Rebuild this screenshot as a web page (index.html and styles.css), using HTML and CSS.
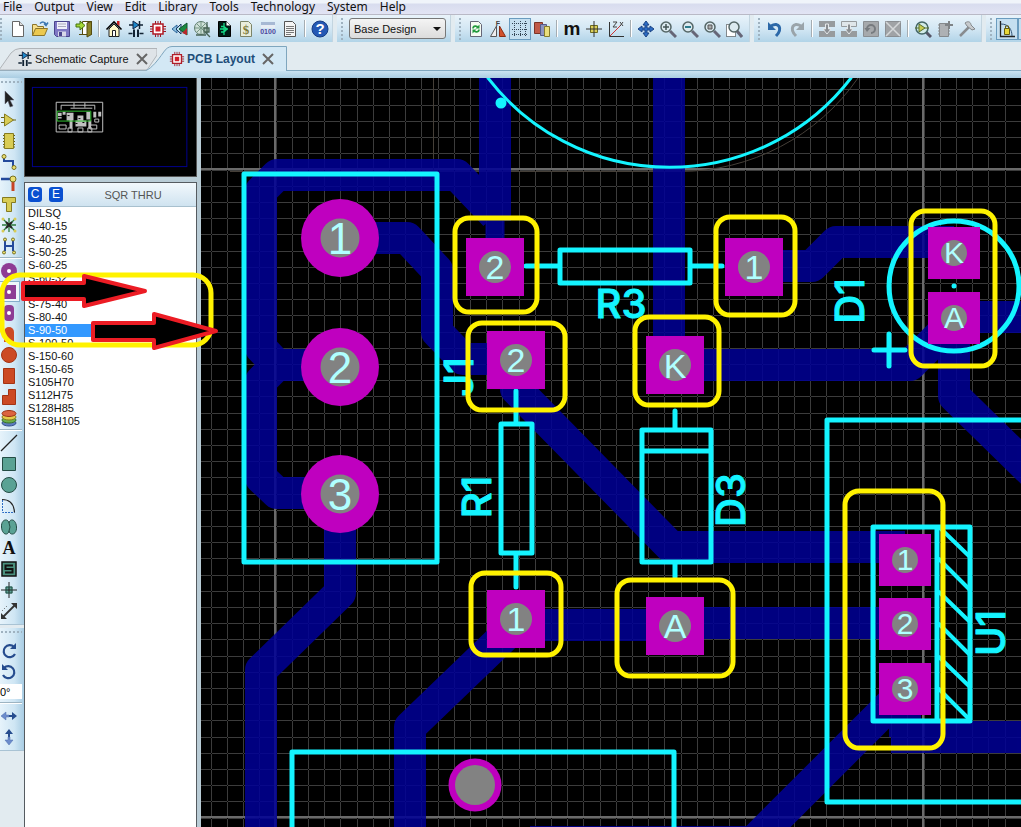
FILE: index.html
```html
<!DOCTYPE html>
<html lang="en">
<head>
<meta charset="utf-8">
<title>PCB Layout</title>
<link rel="stylesheet" href="styles.css">
</head>
<body>
<div class="app">
  <nav class="menubar" aria-label="Main menu">
    <button>File</button><button>Output</button><button>View</button><button>Edit</button><button>Library</button><button>Tools</button><button>Technology</button><button>System</button><button>Help</button>
  </nav>

  <div class="toolbar">
    <div class="group group-first">
      <button aria-label="New"><svg viewBox="0 0 18 18"><path d="M3.500 1.500h7l4 4v11h-11z" fill="#fff" stroke="#666"/><path d="M10.500 1.500v4h4" fill="#ddd" stroke="#666"/></svg></button>
      <button aria-label="Open"><svg viewBox="0 0 18 18"><path d="M1.500 15.500v-11h4l1 2h6v3" fill="#f6e08c" stroke="#8b7428"/><path d="M1.500 15.500l3-7h12l-3 7z" fill="#ecc94e" stroke="#8b7428"/><path d="M9 3.500c2-2 5-2 6 1m-2-1l2 2 2-3" fill="none" stroke="#3b76b0" stroke-width="1.500"/></svg></button>
      <button aria-label="Save"><svg viewBox="0 0 18 18"><path d="M1.500 1.500h15v15h-13l-2-2z" fill="#7f78c4" stroke="#4a448c"/><path d="M4 2h10v7H4z" fill="#f0f0fa"/><path d="M5 4h8M5 6.500h8" stroke="#aab"/><path d="M5 11.500h8v5H5z" fill="#d8d8e8"/><path d="M6 12h3v4H6z" fill="#4a448c"/></svg></button>
      <button aria-label="Close project"><svg viewBox="0 0 18 18"><path d="M7.500 1.500h9v13h-9z" fill="#fff" stroke="#554c10"/><path d="M12 3l4.500-1.500v13L12 17z" fill="#8a8228" stroke="#554c10"/><path d="M1 4h4V1l5 4.500L5 10V7H1z" fill="#a4d836" stroke="#44730f"/><path d="M4 14.500h8" stroke="#554c10"/></svg></button>
      <i class="sep"></i>
      <button aria-label="Home"><svg viewBox="0 0 18 18"><path d="M4 9v7.500h10V9L9 4z" fill="#fff8c8" stroke="#222"/><path d="M1.500 9.500L9 2l7.500 7.500" fill="none" stroke="#000" stroke-width="1.600"/><path d="M12 1h2.500v5L12 4z" fill="#c22"/><path d="M7.500 10.500h3v6h-3z" fill="#fff" stroke="#222"/></svg></button>
      <button aria-label="Schematic"><svg viewBox="0 0 18 18"><g stroke="#123" stroke-width="1.500" fill="none"><path d="M2 5h14M1.500 13.500h4M12.500 13.500h4M12.500 1v8"/><path d="M7 10v7M11 10v7M6 10.500h2M10 10.500h2" stroke-width="2"/></g><path d="M6 1l6 4-6 4z" fill="#1c86c8" stroke="#124"/></svg></button>
      <button aria-label="PCB"><svg viewBox="0 0 18 18"><g stroke="#9c1c28"><path d="M6.500 1v16M9 1v16M11.500 1v16M1 6.500h16M1 9h16M1 11.500h16"/></g><path d="M4 4h10v10H4z" fill="#fff" stroke="#b01c28" stroke-width="1.500"/><path d="M6.500 6.500h5v5h-5z" fill="#d0202c"/></svg></button>
      <button aria-label="3D viewer"><svg viewBox="0 0 18 18"><path d="M1 9l5-4v8z" fill="#8cc0e0" stroke="#2f689c"/><path d="M5 9l5-5v10z" fill="#b8dcec" stroke="#1b3660"/><path d="M8 9l8-6v12z" fill="#1a8840" stroke="#0d542a"/><path d="M11 13l5-5v7z" fill="#b8282c"/></svg></button>
      <button aria-label="Gerber viewer"><svg viewBox="0 0 18 18"><circle cx="8" cy="8" r="6.500" fill="#cfe0d8" stroke="#5e7c6c"/><path d="M2 8h13M8 2v12M4 4l8 8M12 4l-8 8" stroke="#759784"/><path d="M14 2v12M3 15h10M12 12l5 5M11 8h5v4h-5z" fill="#a8bfb4" stroke="#486456" stroke-width="1.300"/></svg></button>
      <button aria-label="Design explorer"><svg viewBox="0 0 18 18"><path d="M3.500 1.500h8l4 4v11h-12z" fill="#001c14" stroke="#000"/><path d="M11.500 1.500v4h4z" fill="#fff"/><path d="M9 3v12M5 9h8M6 6.500h3M9 6.500l3 2.500-3 3H6" stroke="#14d884" fill="none" stroke-width="1.300"/></svg></button>
      <button aria-label="Bill of materials"><svg viewBox="0 0 18 18"><path d="M3.500 1.500h8l3 3v12h-11z" fill="#e9eddc" stroke="#7c8468"/><text x="9" y="14" class="dollar">$</text></svg></button>
      <button aria-label="Source code"><svg viewBox="0 0 18 18"><path d="M2 2h14v6H2z" fill="#e8edf4"/><path d="M2 2h14v3H2z" fill="#a7b9d4"/><text x="9" y="14" class="digits">0100</text></svg></button>
      <button aria-label="Project notes"><svg viewBox="0 0 18 18"><path d="M3.500 1.500h8l3 3v12h-11z" fill="#f5f5f5" stroke="#555"/><path d="M5 6.500h8M5 8.500h8M5 10.500h8M5 12.500h8M5 14.500h5" stroke="#777"/></svg></button>
      <i class="sep"></i>
      <button aria-label="Help"><svg viewBox="0 0 18 18"><circle cx="9" cy="9" r="8" fill="#2458b4" stroke="#163c84"/><text x="9" y="14" class="q">?</text></svg></button>
    </div>

    <div class="group group-select">
      <select aria-label="Design variant"><option>Base Design</option></select>
    </div>

    <div class="group">
      <button aria-label="Redraw"><svg viewBox="0 0 18 18"><path d="M3.500 1.500h8l3 3v12h-11z" fill="#f5fbf2" stroke="#667"/><path d="M6 8.500c0-3 4-3 5-1M12 9.500c0 3-4 3-5 1" fill="none" stroke="#239a3c" stroke-width="1.600"/><path d="M12.500 4.500v4h-4zM5.500 13.500v-4h4z" fill="#239a3c"/></svg></button>
      <button aria-label="Flip"><svg viewBox="0 0 18 18"><path d="M7.500 6v10.500h-6z" fill="#eee" stroke="#555"/><path d="M10.500 6v10.500h6z" fill="#d2512c" stroke="#8b2c12"/><text x="9" y="6" class="tiny">F</text></svg></button>
      <button aria-label="Grid" aria-pressed="true" class="pressed"><svg viewBox="0 0 18 18"><path d="M1 3.500h16M1 9.500h16M1 14.500h16M3.500 1v16M9.500 1v16M14.500 1v16" stroke="#345" stroke-dasharray="1 1"/></svg></button>
      <button aria-label="Layers"><svg viewBox="0 0 18 18"><path d="M1.500 2.500h8v11h-8z" fill="#c05a48" stroke="#7c3426"/><path d="M7.500 4.500h6v11h-6z" fill="#8d94c0" stroke="#555c8c"/><path d="M11.500 6.500h5v10h-5z" fill="#eadf7c" stroke="#857b2c"/></svg></button>
      <i class="sep"></i>
      <button aria-label="Metric" class="metric">m</button>
      <button aria-label="Origin"><svg viewBox="0 0 18 18"><path d="M9 1v16M1 9h16" stroke="#333"/><path d="M5.500 5.500h7v7h-7z" fill="#dcd05a" stroke="#6d6a20"/><path d="M9 5v8M5 9h8" stroke="#333"/></svg></button>
      <button aria-label="Polar"><svg viewBox="0 0 18 18"><path d="M2.500 2v14.500H17" fill="none" stroke="#333"/><path d="M3 16L14 5" stroke="#c33"/><path d="M6 2h4L6 7h4M13 2l3 4M16 2l-3 4" fill="none" stroke="#444"/></svg></button>
      <i class="sep"></i>
      <button aria-label="Pan"><svg viewBox="0 0 18 18"><path d="M9 1l3 4h-2v3h3V6l4 3-4 3v-2h-3v3h2l-3 4-3-4h2v-3H5v2L1 9l4-3v2h3V5H6z" fill="#2c6cc4" stroke="#1a4384"/></svg></button>
      <button aria-label="Zoom in"><svg viewBox="0 0 18 18"><path d="M11 11l6 6" stroke="#667" stroke-width="3"/><circle cx="7" cy="7" r="5" fill="#dceaf0" stroke="#566" stroke-width="1.500"/><path d="M4 7h6M7 4v6" stroke="#455" stroke-width="1.500"/></svg></button>
      <button aria-label="Zoom out"><svg viewBox="0 0 18 18"><path d="M11 11l6 6" stroke="#667" stroke-width="3"/><circle cx="7" cy="7" r="5" fill="#dceaf0" stroke="#566" stroke-width="1.500"/><path d="M4 7h6" stroke="#2c7c8c" stroke-width="2"/></svg></button>
      <button aria-label="Zoom all"><svg viewBox="0 0 18 18"><path d="M11 11l6 6" stroke="#667" stroke-width="3"/><circle cx="7" cy="7" r="5" fill="#dceaf0" stroke="#566" stroke-width="1.500"/><path d="M5 5h4v4H5z" fill="#aaa" stroke="#555"/></svg></button>
      <button aria-label="Zoom area"><svg viewBox="0 0 18 18"><path d="M1.500 4.500h9v12h-9z" fill="#fff" stroke="#222" stroke-dasharray="1 1"/><path d="M12 11l5 6" stroke="#667" stroke-width="3"/><circle cx="9" cy="7" r="5" fill="#dceaf0" stroke="#566" stroke-width="1.500"/></svg></button>
    </div>

    <div class="group group-edit">
      <button aria-label="Undo"><svg viewBox="0 0 18 18"><path d="M5 6c8-5 12 3 5 10" fill="none" stroke="#2c68a8" stroke-width="3"/><path d="M2 2v8h8z" fill="#2c68a8"/></svg></button>
      <button aria-label="Redo"><svg viewBox="0 0 18 18"><path d="M13 6C5 1 1 9 8 16" fill="none" stroke="#9aa4aa" stroke-width="3"/><path d="M16 2v8H8z" fill="#9aa4aa"/></svg></button>
      <i class="sep"></i>
      <button aria-label="Block copy"><svg viewBox="0 0 18 18"><path d="M1 1h16v6H1zM1 11h16v6H1z" fill="#979b9e"/><path d="M7.500 4v5H5l4 5 4-5h-2.500V4z" fill="#8a8e92" stroke="#e5e8ea"/></svg></button>
      <button aria-label="Block move"><svg viewBox="0 0 18 18"><path d="M1.500 1.500h15v5h-15z" fill="#dfe6ea" stroke="#979b9e"/><path d="M1 11h16v6H1z" fill="#979b9e"/><path d="M7.500 4v5H5l4 5 4-5h-2.500V4z" fill="#8a8e92" stroke="#e5e8ea"/></svg></button>
      <button aria-label="Block rotate"><svg viewBox="0 0 18 18"><path d="M1.500 1.500h15v15h-15z" fill="#a6a9ac" stroke="#8a8e92"/><path d="M5 9a4 4 0 1 1 4 4" fill="none" stroke="#777b7f" stroke-width="2"/><path d="M2.500 8h6L5 12z" fill="#777b7f"/></svg></button>
      <button aria-label="Block delete"><svg viewBox="0 0 18 18"><path d="M1.500 1.500h15v15h-15z" fill="#a0a3a6" stroke="#8a8e92"/><path d="M2 2l14 14M16 2L2 16" stroke="#d4d7d9" stroke-width="1.500"/></svg></button>
      <i class="sep"></i>
      <button aria-label="Pick parts"><svg viewBox="0 0 18 18"><path d="M12 12l5 5" stroke="#556" stroke-width="3"/><circle cx="8" cy="8" r="6" fill="#d2ebe8" stroke="#466" stroke-width="1.500"/><path d="M5 4l6 4-6 4zM1 8h4M11 8h4" fill="#c8cc50" stroke="#59702c"/></svg></button>
      <button aria-label="Make package"><svg viewBox="0 0 18 18"><path d="M2 5h2M2 8h2M2 11h2M2 14h2M12 8h2M12 11h2M12 14h2" stroke="#888"/><path d="M3.500 3.500h9v13h-9z" fill="#aeb1b4" stroke="#85898c"/><path d="M13 1v8M9 5h8" stroke="#7f8386" stroke-width="2"/></svg></button>
      <button aria-label="Decompose"><svg viewBox="0 0 18 18"><path d="M2 16l9-9" stroke="#888c90" stroke-width="2.500"/><path d="M7 3c4-3 6 0 6 2l4 4-3 1-5-4z" fill="#c7cacd" stroke="#85898c"/></svg></button>
    </div>

    <div class="group group-last">
      <button aria-label="Trace angle lock" aria-pressed="true" class="pressed"><svg viewBox="0 0 18 18"><path d="M2.500 1v15.500H17" fill="none" stroke="#222" stroke-width="1.300"/><path d="M3 4c8 0 11 6 11 12" fill="none" stroke="#357"/><path d="M6.500 8.500h5v6h-5z" fill="#e8d838" stroke="#655d10"/><path d="M7.500 8V6h3v2" fill="none" stroke="#655d10"/></svg></button>
      <button aria-label="Auto trace" aria-pressed="true" class="pressed"></button>
    </div>
  </div>

  <div class="tabs" role="tablist">
    <div class="tab" role="tab">
      <svg class="tab-shape" viewBox="0 0 157 24" preserveAspectRatio="none"><path d="M-1 23L11 6Q15 1.500 20 1.500H157V8L147 23z" fill="#dfe4e8" stroke="#b0b4b8"/></svg>
      <svg class="tab-icon" viewBox="0 0 18 18"><g stroke="#123" stroke-width="1.500" fill="none"><path d="M2 5h14M1.500 13.500h4M12.500 13.500h4M12.500 1v8"/><path d="M7 10v7M11 10v7" stroke-width="2"/></g><path d="M6 1l6 4-6 4z" fill="#1c86c8" stroke="#124"/></svg>
      <span>Schematic Capture</span>
      <button aria-label="Close Schematic Capture"><svg viewBox="0 0 12 12"><path d="M1 1l10 10M11 1L1 11" stroke="#666" stroke-width="2"/></svg></button>
    </div>
    <div class="tab active" role="tab" aria-selected="true">
      <svg class="tab-shape" viewBox="0 0 141 25" preserveAspectRatio="none"><path d="M0 24.500C6 22 12 14 17 7Q21 .5 26 .5H140.500V25H0z" fill="#d3e8f5"/><path d="M0 24.500C6 22 12 14 17 7Q21 .5 26 .5H140.500V25" fill="none" stroke="#7fa6be"/></svg>
      <svg class="tab-icon" viewBox="0 0 18 18"><g stroke="#9c1c28"><path d="M6.500 1v16M9 1v16M11.500 1v16M1 6.500h16M1 9h16M1 11.500h16"/></g><path d="M4 4h10v10H4z" fill="#fff" stroke="#b01c28" stroke-width="1.500"/><path d="M6.500 6.500h5v5h-5z" fill="#d0202c"/></svg>
      <span>PCB Layout</span>
      <button aria-label="Close PCB Layout"><svg viewBox="0 0 12 12"><path d="M1 1l10 10M11 1L1 11" stroke="#666" stroke-width="2"/></svg></button>
    </div>
  </div>

  <main class="work">
    <aside class="tools">
      <div class="toolset">
        <i class="grip"></i>
        <button aria-label="Selection"><svg viewBox="0 0 18 18"><path d="M5 1v13l3-3 2 6 3-1-3-6h4z" fill="#222" stroke="#667" stroke-width=".5"/></svg></button>
        <button aria-label="Component"><svg viewBox="0 0 18 18"><path d="M1 6.500h4M1 11.500h4M12 9h4" stroke="#6b6414"/><path d="M4.500 3l9 6-9 6z" fill="#d8cc54" stroke="#857b20"/></svg></button>
        <button aria-label="Package"><svg viewBox="0 0 18 18"><path d="M3 3.500h12M3 6.500h12M3 9.500h12M3 12.500h12M3 15h12" stroke="#6b6414"/><path d="M4.500 1.500h9v15h-9z" fill="#d8cc54" stroke="#857b20"/></svg></button>
        <button aria-label="Track"><svg viewBox="0 0 18 18"><path d="M4 4v4h9v6" fill="none" stroke="#244a9c" stroke-width="2"/><circle cx="4" cy="3.500" r="2" fill="#eadf70" stroke="#777020"/><circle cx="14" cy="14.500" r="2" fill="#eadf70" stroke="#777020"/></svg></button>
        <button aria-label="Via"><svg viewBox="0 0 18 18"><path d="M1 5h11" stroke="#244a9c" stroke-width="2.500"/><path d="M13 7v10" stroke="#c84424" stroke-width="3"/><circle cx="13" cy="5" r="3" fill="#eadf70" stroke="#777020"/></svg></button>
        <button aria-label="Zone"><svg viewBox="0 0 18 18"><path d="M2.500 2.500h13v5h-4v9h-5v-9h-4z" fill="#d8cc54" stroke="#857b20"/></svg></button>
        <button aria-label="Ratsnest"><svg viewBox="0 0 18 18"><path d="M9 2v14M3 3l12 12M15 3L3 15M2 9h14" stroke="#2d7a3c" stroke-width="1.300"/><path d="M6 6l6 6M12 6l-6 6" stroke="#222" stroke-width="2"/><g fill="#d8cc54"><circle cx="3" cy="3" r="1.500"/><circle cx="15" cy="3" r="1.500"/><circle cx="3" cy="15" r="1.500"/><circle cx="15" cy="15" r="1.500"/></g></svg></button>
        <button aria-label="Connectivity"><svg viewBox="0 0 18 18"><path d="M5 3v6M13 3v11M5 9h8M5 9v5" stroke="#244a9c" stroke-width="2" fill="none"/><g fill="#eadf70" stroke="#777020"><circle cx="5" cy="2.500" r="1.500"/><circle cx="13" cy="2.500" r="1.500"/><circle cx="4" cy="15.500" r="1.500"/><circle cx="14" cy="15.500" r="1.500"/></g></svg></button>
        <i class="rule"></i>
        <button aria-label="Round pad"><svg viewBox="0 0 18 18"><circle cx="9" cy="9" r="8" fill="#8e3c94"/><circle cx="9" cy="9" r="2" fill="#fff"/></svg></button>
        <button aria-label="Square pad" class="chosen"><svg viewBox="0 0 18 18"><path d="M2 2h14v14H2z" fill="#8e3c94"/><circle cx="9" cy="9" r="2" fill="#fff"/></svg></button>
        <button aria-label="DIL pad"><svg viewBox="0 0 18 18"><rect x="4" y="1" width="10" height="16" rx="4" fill="#8e3c94"/><circle cx="9" cy="9" r="2" fill="#fff"/></svg></button>
        <button aria-label="Edge connector pad"><svg viewBox="0 0 18 18"><path d="M4 17V7a5 5 0 0 1 10 0v10z" fill="#cc4a24"/></svg></button>
        <button aria-label="Circular SMT pad"><svg viewBox="0 0 18 18"><circle cx="9" cy="9" r="7.500" fill="#cc4a24" stroke="#a43414"/></svg></button>
        <button aria-label="Rectangular SMT pad"><svg viewBox="0 0 18 18"><path d="M3.500 1.500h11v15h-11z" fill="#cc4a24" stroke="#a43414"/></svg></button>
        <button aria-label="Polygonal SMT pad"><svg viewBox="0 0 18 18"><path d="M2.500 16.500v-9h6v-6h7v15z" fill="#cc4a24" stroke="#a43414"/></svg></button>
        <button aria-label="Pad stack"><svg viewBox="0 0 18 18"><ellipse cx="9" cy="14" rx="7" ry="3" fill="#5c7cc0" stroke="#33508c"/><ellipse cx="9" cy="11" rx="7" ry="3" fill="#6ab04c" stroke="#3c7428"/><ellipse cx="9" cy="8" rx="7" ry="3" fill="#e4cc48" stroke="#8c7820"/><ellipse cx="9" cy="4.500" rx="7" ry="3" fill="#dc6440" stroke="#9c3414"/></svg></button>
        <i class="rule"></i>
        <button aria-label="Line"><svg viewBox="0 0 18 18"><path d="M1 17L17 1" stroke="#222" stroke-width="1.300"/></svg></button>
        <button aria-label="Box"><svg viewBox="0 0 18 18"><path d="M2.500 2.500h13v13h-13z" fill="#5aa294" stroke="#244c44"/></svg></button>
        <button aria-label="Circle"><svg viewBox="0 0 18 18"><circle cx="9" cy="9" r="7.500" fill="#5aa294" stroke="#244c44"/></svg></button>
        <button aria-label="Arc"><svg viewBox="0 0 18 18"><path d="M2.500 3v12.500h12" fill="none" stroke="#2c6cc4" stroke-dasharray="2 1"/><path d="M2 2.500c8 0 12 5 12.500 13" fill="none" stroke="#222" stroke-width="1.200"/></svg></button>
        <button aria-label="Closed path"><svg viewBox="0 0 18 18"><path d="M9 5c1-5 7-4 7.500 4S10 18 9 13C8 18 2 17 1.500 9S8 0 9 5z" fill="#5aa294" stroke="#244c44"/><path d="M9 5q2 4 0 8" fill="none" stroke="#244c44"/></svg></button>
        <button aria-label="Text" class="serif">A</button>
        <button aria-label="Symbol"><svg viewBox="0 0 18 18"><path d="M2 2h14v14H2z" fill="#4a907e" stroke="#111" stroke-width="1.500"/><path d="M13 5.500H5.500V9h7v3.500H5" fill="none" stroke="#111" stroke-width="2"/></svg></button>
        <button aria-label="Marker"><svg viewBox="0 0 18 18"><path d="M5.500 5.500h7v7h-7z" fill="#5aa294"/><path d="M9 1v16M1 9h16" stroke="#222"/><path d="M6 6h6v6H6z" fill="none" stroke="#244c44"/></svg></button>
        <button aria-label="Dimension"><svg viewBox="0 0 18 18"><path d="M2 16L16 2" stroke="#333" stroke-width="1.800"/><path d="M1 17v-6l6 6zM17 1v6l-6-6z" fill="#333"/><path d="M2 9l6-6" stroke="#555" stroke-dasharray="1 2"/></svg></button>
      </div>
      <div class="toolset">
        <i class="grip grip-tall"></i>
        <button aria-label="Rotate clockwise"><svg viewBox="0 0 18 18"><path d="M14 5a6 6 0 1 0 1 7" fill="none" stroke="#264c8e" stroke-width="2.200"/><path d="M10 7h6V1z" fill="#264c8e"/></svg></button>
        <button aria-label="Rotate anticlockwise"><svg viewBox="0 0 18 18"><path d="M4 5a6 6 0 1 1-1 7" fill="none" stroke="#264c8e" stroke-width="2.200"/><path d="M8 7H2V1z" fill="#264c8e"/></svg></button>
        <input class="angle" type="text" aria-label="Rotation angle" value="0°">
        <i class="rule"></i>
        <button aria-label="Mirror horizontally"><svg viewBox="0 0 18 18"><path d="M1 9l5-4v3h3v2H6v3z" fill="#6c8ccc" stroke="#4c6cac" stroke-width=".5"/><path d="M17 9l-5-4v3H9v2h3v3z" fill="#264c8e"/></svg></button>
        <button aria-label="Mirror vertically"><svg viewBox="0 0 18 18"><path d="M9 1l4 5h-3v3H8V6H5z" fill="#264c8e"/><path d="M9 17l4-5h-3V9H8v3H5z" fill="#6c8ccc" stroke="#4c6cac" stroke-width=".5"/></svg></button>
      </div>
    </aside>

    <section class="side">
      <svg class="preview" viewBox="0 0 171 99" preserveAspectRatio="xMinYMin meet">
        <rect x="7.500" y="9.500" width="156" height="80" fill="none" stroke="#00008c"/>
        <g fill="none" stroke="#c0c0c0">
          <path d="M31.500 24.500h47v30h-47zM36.500 32v-4.500h34V32M46 30.500h22M49.500 25v5M60.500 25v5M34.500 47.500h7v4h-7zM65.500 47.500h7v4h-7zM70.500 41.500h4v3h-4zM43.500 50.500h4v4h-4zM53.500 50.500h5v4h-5zM63.500 50.500h4v4h-4z"/>
        </g>
        <path d="M42 35h7v8h-7zM53 38h6v9h-6zM62 34h4v8h-4zM69 34h3v6h-3zM33 35h4v6h-4zM38 34h3v3h-3zM45 43h3v8h-3zM51 43h11v6h-11zM64 43h3v8h-3zM74 34h3v5h-3z" fill="#c0c0c0"/>
        <path d="M33 39h8M43 38h2M54 41h2M51 46h2M58 45h2M35 49h4M67 49h3" stroke="#000"/>
        <path d="M32.500 33.500h34v10h-34z" fill="none" stroke="#30c030"/>
      </svg>
      <div class="picker">
        <header class="picker-head">
          <button aria-label="Create">C</button><button aria-label="Edit">E</button>
          <h2>SQR THRU</h2>
        </header>
        <ul class="styles">
          <li>DILSQ</li><li>S-40-15</li><li>S-40-25</li><li>S-50-25</li><li>S-60-25</li><li>S-60-32</li><li>&nbsp;</li><li>S-75-40</li><li>S-80-40</li><li class="selected">S-90-50</li><li>S-100-50</li><li>S-150-60</li><li>S-150-65</li><li>S105H70</li><li>S112H75</li><li>S128H85</li><li>S158H105</li>
        </ul>
      </div>
    </section>

    <section class="board" aria-label="Board layout">
      <svg viewBox="201 78 820 749" preserveAspectRatio="xMinYMin slice">
        <defs>
          <pattern id="grid" x="275" y="169" width="81" height="81" patternUnits="userSpaceOnUse">
            <path d="M1 0h1v81h-1zM17 0h1v81h-1zM33 0h1v81h-1zM49 0h1v81h-1zM65 0h1v81h-1zM0 1v1h81v-1zM0 17v1h81v-1zM0 33v1h81v-1zM0 49v1h81v-1zM0 65v1h81v-1z" fill="#3c3c3c"/>
          </pattern>
        </defs>
        <rect x="201" y="78" width="820" height="749" fill="#000"/>
        <rect x="201" y="78" width="820" height="749" fill="url(#grid)"/>
        <path d="M275 78V827M923 78V827M201 169H1021M201 817H1021" stroke="#6a6a6a" stroke-width="2"/>
        <path d="M433.500 78V181M230 171.500H680A217 217 0 0 0 858 78" fill="none" stroke="#453f38"/>

        <g class="traces">
          <path d="M495 78V221M495 215L457 175H277L261 191V348L277 365H340M277 365L261 381V478L277 493H340"/>
          <path d="M340 238H407L437 270V332L463 359H516V389L671 547H905"/>
          <path d="M669 78V365H910L954 321"/>
          <path d="M754 266H812L836 242H954"/>
          <path d="M1040 317H954V396L1040 480"/>
          <path d="M340 493V593L261 670V840"/>
          <path d="M675 625H516L410 727V840M675 623H905"/>
          <path d="M905 690L755 840M905 700V737M891 737H1040"/>
          <path class="neck" d="M495 220V250"/>
          <path class="edge" d="M530 827H760"/>
        </g>

        <g class="silk">
          <path class="arc" d="M488 78A229 229 0 0 0 851 78"/>
          <path d="M244 174H437V562H244zM560 250H690V283H560zM526 266H560M690 266H722M501 424H532V553H501zM516 391V424M516 553V587M642 430H711V562H642zM642 451H711M675 411V430M675 562V577"/>
          <path d="M1030 420H827V802H1030M292 840V752H674V840M873 527H970V721H873zM937 527V721"/>
          <path class="hatch" d="M939 527L970 557M939 559L970 590M939 592L970 622M939 624L970 655M939 657L970 687M939 689L970 720"/>
          <circle cx="954" cy="286" r="65"/>
          <path d="M874 350H905M889 334V366"/>
        </g>
        <g fill="#14f4ff"><circle cx="501" cy="103" r="5.500"/><circle cx="954" cy="286" r="2.500"/></g>

        <g class="names">
          <text x="621" y="318">R3</text>
          <text transform="translate(864 301) rotate(-90)">D1</text>
          <text transform="translate(473 377) rotate(-90)">J1</text>
          <text transform="translate(491 497) rotate(-90)">R1</text>
          <text transform="translate(745 500) rotate(-90)">D3</text>
          <text transform="translate(1005 633) rotate(-90)">U1</text>
        </g>

        <g fill="#bf00bf">
          <circle cx="340" cy="238" r="39"/><circle cx="340" cy="367" r="39"/><circle cx="340" cy="494" r="39"/><circle cx="475" cy="785" r="26.500"/>
          <path d="M466 238h58v58h-58zM487 331h58v58h-58zM725 238h58v58h-58zM646 336h58v58h-58zM487 590h58v58h-58zM646 597h58v58h-58z"/>
          <path d="M928 227h52v52h-52zM928 292h52v52h-52zM879 534h52v52h-52zM879 598h52v52h-52zM879 663h52v52h-52z"/>
        </g>
        <g fill="#828282">
          <circle cx="340" cy="238" r="19.500"/><circle cx="340" cy="367" r="19.500"/><circle cx="340" cy="494" r="19.500"/><circle cx="475" cy="785" r="20"/>
          <circle cx="495" cy="267" r="16"/><circle cx="516" cy="360" r="16"/><circle cx="754" cy="267" r="16"/><circle cx="675" cy="365" r="16"/><circle cx="516" cy="619" r="16"/><circle cx="675" cy="626" r="16"/>
          <circle cx="954" cy="253" r="13"/><circle cx="954" cy="318" r="13"/><circle cx="905" cy="560" r="13"/><circle cx="905" cy="624" r="13"/><circle cx="905" cy="689" r="13"/>
        </g>
        <g class="pins pins-l"><text x="340" y="254">1</text><text x="340" y="383">2</text><text x="340" y="510">3</text></g>
        <g class="pins pins-m"><text x="495" y="279">2</text><text x="516" y="372">2</text><text x="754" y="279">1</text><text x="675" y="378">K</text><text x="516" y="631">1</text><text x="675" y="638">A</text></g>
        <g class="pins pins-s"><text x="954" y="263">K</text><text x="954" y="328">A</text><text x="905" y="570">1</text><text x="905" y="634">2</text><text x="905" y="699">3</text></g>

        <g class="marks">
          <rect x="455" y="218" width="82" height="94" rx="14"/>
          <rect x="468" y="323" width="97" height="87" rx="14"/>
          <rect x="716" y="217" width="79" height="98" rx="14"/>
          <rect x="635" y="317" width="84" height="88" rx="14"/>
          <rect x="911" y="211" width="84" height="155" rx="14"/>
          <rect x="471" y="573" width="90" height="82" rx="14"/>
          <rect x="617" y="580" width="116" height="96" rx="14"/>
          <rect x="845" y="491" width="98" height="257" rx="14"/>
        </g>
      </svg>
    </section>

    <svg class="notes" viewBox="0 0 222 290" aria-hidden="true">
      <rect x="2" y="197" width="209" height="70" rx="18" fill="none" stroke="#fff200" stroke-width="5"/>
      <g fill="#000" stroke="#ec1c24" stroke-width="4" stroke-linejoin="round">
        <path d="M23 205H84V198L145 213L84 228V221H23z"/>
        <path d="M93 245H154V236L216 253L154 270V262H93z"/>
      </g>
    </svg>
  </main>
</div>
</body>
</html>
```
FILE: styles.css
```css
* { box-sizing: border-box; }
body {
  margin: 0;
  font-family: "Liberation Sans", Arial, sans-serif;
  font-size: 11px;
  color: #111;
  background: #e2ebf0;
}
button {
  margin: 0;
  padding: 0;
  border: 0;
  background: none;
  font: inherit;
  color: inherit;
}
.app {
  display: flex;
  flex-direction: column;
  height: 100vh;
  overflow: hidden;
}

.menubar {
  display: flex;
  align-items: flex-start;
  gap: 12px;
  height: 15px;
  padding-left: 3px;
  background: linear-gradient(#f0f4fa 0 3px, #d8dcee 4px, #e2e4f4);
  border-bottom: 1px solid #b9b9c6;
  font: 12px/14px "Noto Sans", sans-serif;
}

.toolbar {
  display: flex;
  gap: 4px;
  height: 27px;
  overflow: hidden;
}
.group {
  position: relative;
  display: flex;
  align-items: center;
  flex: none;
  padding: 0 4px 0 10px;
  background: linear-gradient(#e9f3fa, #d3e7f4 50%, #b2d4e8);
  border-right: 1px solid #c3d5e0;
}
.group::before {
  content: "";
  position: absolute;
  left: 4px;
  top: 3px;
  bottom: 1px;
  width: 2px;
  background: repeating-linear-gradient(#9fb2c0 0 2px, transparent 2px 4px);
}
.group-first { padding: 0 1px 0 7px; }
.group-first::before { left: 0; }
.group-select { padding-left: 12px; }
.group-edit { padding-right: 3px; }
.toolbar button {
  flex: none;
  display: flex;
  align-items: center;
  justify-content: center;
  width: 22px;
  height: 22px;
}
.toolbar svg { flex: none; width: 18px; height: 18px; }
.toolbar .pressed {
  border: 1px solid #6b9cbf;
  background: #c5dff0;
}
.toolbar .metric { font: bold 19px/20px "Liberation Sans", Arial, sans-serif; }
.sep {
  flex: none;
  width: 2px;
  height: 17px;
  margin: 0 3px;
  border-left: 1px solid #a5adb2;
  background: #fff;
}
.toolbar select {
  appearance: none;
  width: 97px;
  height: 21px;
  padding: 0 4px;
  border: 1px solid #777;
  border-radius: 3px;
  font: 11px "Liberation Sans", Arial, sans-serif;
  color: #111;
  background: linear-gradient(#f4f4f4, #dcdcdc);
}
.group-select::after {
  content: "";
  position: absolute;
  right: 9px;
  top: 12px;
  border: 4px solid transparent;
  border-top-color: #111;
  border-bottom: 0;
}
.dollar { font: bold 13px "Liberation Serif", serif; fill: #7d7a38; text-anchor: middle; }
.digits { font: bold 7px "Liberation Sans", sans-serif; fill: #4c449c; text-anchor: middle; }
.q { font: bold 15px "Liberation Sans", sans-serif; fill: #fff; text-anchor: middle; }
.tiny { font: bold 7px "Liberation Sans", sans-serif; fill: #444; text-anchor: middle; }

.tabs {
  display: flex;
  align-items: flex-end;
  height: 36px;
  padding-bottom: 7px;
  background: linear-gradient(#e2ebf0 0 28px, #7fa6be 28px 29px, #c9e2f1 29px, #aacde2);
}
.tab {
  position: relative;
  display: flex;
  align-items: center;
  width: 157px;
  height: 24px;
  padding-left: 17px;
}
.tab.active {
  width: 141px;
  height: 25px;
  margin-left: -11px;
  padding-left: 23px;
  font-size: 12px;
  font-weight: bold;
  color: #1f4e79;
}
.tab-shape {
  position: absolute;
  inset: 0;
  width: 100%;
  height: 100%;
}
.tab-icon { position: relative; width: 16px; height: 16px; margin-right: 2px; }
.tab span { position: relative; white-space: nowrap; }
.tab button { position: relative; margin-left: 7px; height: 12px; }
.tab button svg { display: block; width: 12px; height: 12px; }

.work {
  position: relative;
  flex: 1;
  display: grid;
  grid-template-columns: 24px 177px 1fr;
  min-height: 0;
}
.tools {
  display: flex;
  flex-direction: column;
  gap: 3px;
}
.toolset {
  display: flex;
  flex-direction: column;
  align-items: flex-start;
  padding-bottom: 3px;
  background: linear-gradient(90deg, #e6f3fb, #cfe6f4 60%, #a9cde4);
  border-bottom: 1px solid #a9c3d4;
}
.toolset button {
  display: flex;
  align-items: center;
  justify-content: center;
  width: 18px;
  height: 21px;
}
.toolset svg { flex: none; width: 18px; height: 18px; }
.toolset .chosen {
  width: 20px;
  padding-right: 1px;
  background: #eef6fb;
  border: 1px solid #86aecb;
  border-left: 0;
}
.toolset .serif { font: bold 18px/20px "Liberation Serif", serif; }
.grip {
  width: 22px;
  height: 10px;
  background: repeating-linear-gradient(90deg, #9fb2c0 0 2px, transparent 2px 4px) 1px 3px / 100% 2px no-repeat;
}
.grip-tall { height: 12px; }
.rule {
  width: 22px;
  height: 2px;
  margin: 1px 0;
  border-top: 1px solid #9db4c2;
  background: #fff;
}
.angle {
  width: 22px;
  height: 15px;
  margin: 2px 0;
  padding: 0;
  border: 0;
  background: #fff;
  font: 11px "Liberation Sans", Arial, sans-serif;
}

.side {
  display: flex;
  flex-direction: column;
  gap: 5px;
  min-height: 0;
  padding-right: 4px;
  background: #b9ccd6;
}
.preview {
  display: block;
  width: 100%;
  height: 99px;
  background: #000;
  border: 1px solid #555;
  border-top: 0;
}
.picker {
  flex: 1;
  background: #fff;
  border: 1px solid #555b60;
  border-bottom: 0;
}
.picker-head {
  display: flex;
  align-items: center;
  gap: 7px;
  height: 24px;
  padding-left: 3px;
  background: linear-gradient(#f2f8fc, #cfe3f0);
  border-bottom: 1px solid #a8c0ce;
}
.picker-head button {
  width: 14px;
  height: 15px;
  border-radius: 3px;
  background: #0a50d0;
  color: #fff;
  font-size: 12px;
  line-height: 15px;
}
.picker-head h2 {
  margin: 0 auto;
  font-size: 11px;
  font-weight: normal;
  color: #555;
}
.styles {
  margin: 0;
  padding: 0;
  list-style: none;
}
.styles li {
  height: 13px;
  padding-left: 3px;
  line-height: 13px;
}
.styles .selected {
  background: #3399ff;
  color: #fff;
}

.board {
  min-width: 0;
  min-height: 0;
  overflow: hidden;
  background: #000;
}
.board svg { display: block; width: 100%; height: 100%; }
.traces {
  fill: none;
  stroke: #000096;
  stroke-width: 32px;
  stroke-linejoin: round;
  opacity: .86;
}
.traces .neck { stroke-width: 19px; }
.traces .edge { stroke-width: 2px; }
.silk {
  fill: none;
  stroke: #14f4ff;
  stroke-width: 5px;
  stroke-linecap: round;
  stroke-linejoin: round;
}
.silk .arc { stroke-width: 3px; }
.silk .hatch { stroke-width: 4px; }
.names {
  font: 500 40px Inter, sans-serif;
  fill: #14f4ff;
  stroke: #14f4ff;
  stroke-width: 1px;
  stroke-linejoin: round;
  text-anchor: middle;
}
.pins {
  font-family: "Liberation Sans", Arial, sans-serif;
  fill: #b0ffff;
  text-anchor: middle;
}
.pins-l { font-size: 44px; }
.pins-m { font-size: 34px; }
.pins-s { font-size: 30px; }
.marks {
  fill: none;
  stroke: #fff200;
  stroke-width: 5px;
}
.notes {
  position: absolute;
  left: 0;
  top: 0;
  width: 222px;
  height: 290px;
  pointer-events: none;
}
```
